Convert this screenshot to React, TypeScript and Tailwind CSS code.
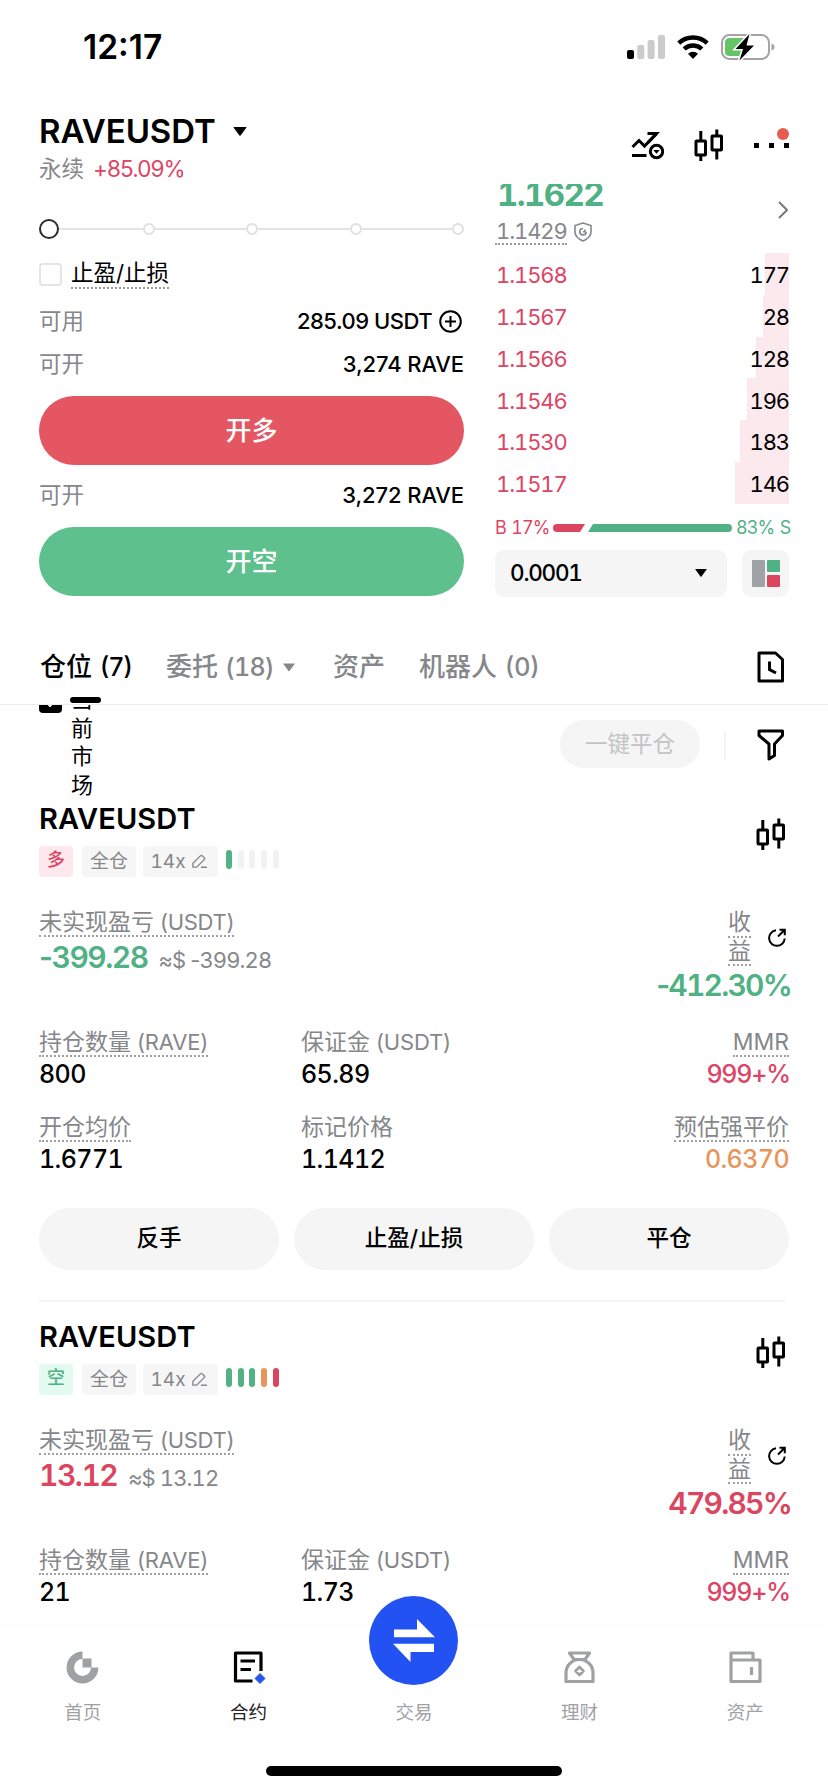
import { Fragment } from "react";

type Position = {
  side: string;
  sideClass: string;
  bars: string[];
  pnl: string;
  roi: string;
  tone: string;
  size: string;
  margin: string;
  prices?: { open: string; mark: string; liq: string };
};

const asks = [
  { price: "1.1568", qty: "177", bar: "w-[24px]" },
  { price: "1.1567", qty: "28", bar: "w-[26px]" },
  { price: "1.1566", qty: "128", bar: "w-[33px]" },
  { price: "1.1546", qty: "196", bar: "w-[42px]" },
  { price: "1.1530", qty: "183", bar: "w-[49px]" },
  { price: "1.1517", qty: "146", bar: "w-[54px]" },
];

const positions: Position[] = [
  {
    side: "多",
    sideClass: "bg-[#fde9ed] text-[#dc4565]",
    bars: ["bg-[#52b283]", "bg-[#f2f2f4]", "bg-[#f2f2f4]", "bg-[#f2f2f4]", "bg-[#f2f2f4]"],
    pnl: "-399.28",
    roi: "-412.30%",
    tone: "text-[#50b184]",
    size: "800",
    margin: "65.89",
    prices: { open: "1.6771", mark: "1.1412", liq: "0.6370" },
  },
  {
    side: "空",
    sideClass: "bg-[#e2faf0] text-[#50b184]",
    bars: ["bg-[#52b283]", "bg-[#52b283]", "bg-[#52b283]", "bg-[#e7955a]", "bg-[#dc4560]"],
    pnl: "13.12",
    roi: "479.85%",
    tone: "text-[#dc4560]",
    size: "21",
    margin: "1.73",
  },
];

function Caret({ className }: { className: string }) {
  return (
    <svg viewBox="0 0 12 8" className={className} fill="currentColor">
      <path d="M0.6 0h10.8q0.6 0 0.2 0.6L6.5 7.5q-0.5 0.6-1 0L0.4 0.6Q0 0 0.6 0z" />
    </svg>
  );
}

function CandleIcon() {
  return (
    <svg viewBox="0 0 30 32" className="h-8 w-[30px]" fill="none" stroke="black" strokeWidth="3">
      <rect x="2" y="12" width="9.5" height="14" rx="0.5" />
      <rect x="18" y="7" width="9.5" height="14" rx="0.5" />
      <path d="M6.8 2v10M6.8 26v6M22.8 0.5V7M22.8 21v9.5" />
    </svg>
  );
}

// digits are tabular, the minus sign keeps its narrow form
function Signed({ value }: { value: string }) {
  const negative = value.startsWith("-");
  return (
    <>
      {negative && <span className="normal-nums">-</span>}
      {negative ? value.slice(1) : value}
    </>
  );
}

function StatusBar() {
  return (
    <div className="flex h-[94px] shrink-0 items-center justify-between pr-[53px] pl-[83px]">
      <span className="text-[33.5px] leading-10 font-semibold">12:17</span>
      <div className="flex items-center gap-[12px]">
        <svg viewBox="0 0 38 24" className="h-6 w-[38px]">
          <rect x="0" y="15" width="7" height="9" rx="2" fill="black" />
          <rect x="10.3" y="10" width="7" height="14" rx="2" fill="#cbcbcb" />
          <rect x="20.6" y="5" width="7" height="19" rx="2" fill="#cbcbcb" />
          <rect x="31" y="0" width="7" height="24" rx="2" fill="#cbcbcb" />
        </svg>
        <svg viewBox="0 0 32 24" className="h-6 w-8" fill="none" stroke="black" strokeWidth="4.4">
          <path d="M1.8 8.2a20.5 20.5 0 0 1 28.4 0" />
          <path d="M7.2 14a12.8 12.8 0 0 1 17.6 0" />
          <path d="M16 24l-5-5.2a7.4 7.4 0 0 1 10 0z" fill="black" stroke="none" />
        </svg>
        <svg viewBox="0 0 54 28" className="h-7 w-[54px]">
          <rect x="1" y="2" width="47" height="24" rx="7.5" fill="none" stroke="#a4a4a4" strokeWidth="2" />
          <path d="M50.5 10.5q3 1 3 3.5t-3 3.5z" fill="#a4a4a4" />
          <path d="M8.5 5H26v18H8.5Q4 23 4 18.5v-9Q4 5 8.5 5z" fill="#65c466" />
          <path d="M28.5 1L14.5 16h7.5l-3.5 11.5L33 12.5h-7.5z" fill="black" stroke="white" strokeWidth="3" paintOrder="stroke" />
        </svg>
      </div>
    </div>
  );
}

function PairHeader() {
  return (
    <header className="flex h-[90px] shrink-0 justify-between pr-[39px] pl-[39px]">
      <div className="pt-[17px]">
        <div className="flex items-center gap-[17px]">
          <h1 className="text-[33px] leading-10 font-semibold tracking-[-0.1px]">RAVEUSDT</h1>
          <Caret className="h-[9px] w-[14px]" />
        </div>
        <div className="flex gap-2 text-[22.5px] leading-9">
          <span className="text-[#85878a]">永续</span>
          <span className="ml-px tracking-[-0.9px] text-[#dc4565]">+85.09%</span>
        </div>
      </div>
      <div className="flex items-start gap-[30px] pt-[35px]">
        <svg viewBox="0 0 34 32" className="mt-px h-8 w-[34px]" fill="none" stroke="black" strokeWidth="3">
          <path d="M2.5 17L9 10.5l5.5 5.5L26.5 3.8" />
          <path d="M17.5 3.5h9L18 12.5" />
          <path d="M2 25.5h14.5" />
          <circle cx="26.5" cy="21.5" r="6.2" />
          <path d="M23.3 20h6.4l-3.2 3.8z" fill="black" stroke="none" />
        </svg>
        <CandleIcon />
        <div className="relative flex w-[35px] justify-between pt-[14px]">
          <i className="size-[5px] bg-black" />
          <i className="size-[5px] bg-black" />
          <i className="size-[5px] bg-black" />
          <i className="absolute -top-px right-0 size-3 rounded-full bg-[#e85b50]" />
        </div>
      </div>
    </header>
  );
}

function OrderForm() {
  return (
    <div className="flex w-[425px] flex-col pt-[35px]">
      <div className="flex h-5 items-center">
        <i className="size-5 rounded-full border-[2.5px] border-[#2c2c2e]" />
        {["w-[84px]", "w-[92px]", "w-[92px]", "w-[90px]"].map((w, i) => (
          <Fragment key={i}>
            <i className={`h-0.5 bg-[#e3e3e3] ${w}`} />
            <i className="size-3 shrink-0 rounded-full border-2 border-[#e0e0e0]" />
          </Fragment>
        ))}
      </div>

      <div className="mt-5 flex items-center gap-[9px]">
        <i className="size-[23px] rounded-sm border-2 border-[#e4e4e4]" />
        <span className="border-b-2 border-dotted border-[#9a9a9a] text-[22.5px] leading-[28px]">止盈/止损</span>
      </div>

      <div className="mt-[14px] flex h-9 items-center justify-between text-[22.5px]">
        <span className="text-[#85878a]">可用</span>
        <span className="flex items-center gap-[7px] pr-0.5 text-[22px] font-medium tracking-[-0.5px]">
          285.09 USDT
          <svg viewBox="0 0 23 23" className="size-[23px]" fill="none" stroke="black" strokeWidth="2">
            <circle cx="11.5" cy="11.5" r="10.3" />
            <path d="M11.5 6v11M6 11.5h11" />
          </svg>
        </span>
      </div>
      <div className="mt-[7px] flex h-9 items-center justify-between text-[22.5px]">
        <span className="text-[#85878a]">可开</span>
        <span className="text-[22px] font-medium tracking-[-0.1px]">3,274 RAVE</span>
      </div>
      <button className="mt-[14px] h-[69px] rounded-full bg-[#e45661] text-[26px] font-medium text-white">开多</button>
      <div className="mt-3 flex h-9 items-center justify-between text-[22.5px]">
        <span className="text-[#85878a]">可开</span>
        <span className="text-[22px] font-medium tracking-[-0.1px]">3,272 RAVE</span>
      </div>
      <button className="mt-[14px] h-[69px] rounded-full bg-[#5ec08c] text-[26px] font-medium text-white">开空</button>
    </div>
  );
}

function OrderBook() {
  return (
    <div className="flex w-[294px] flex-col tabular-nums">
      <div className="flex h-[69px] justify-between">
        <div>
          <div className="-mt-[10px] pl-0.5 text-[33px] leading-10 font-bold tracking-[-1.6px] text-[#50b184]">1.1622</div>
          <div className="mt-[5px] flex items-center gap-[7px] text-[#85878a]">
            <span className="border-b-2 border-dotted border-[#9a9a9a] pl-px text-[22px] leading-6 tracking-[-1.1px]">1.1429</span>
            <svg viewBox="0 0 18 20" className="h-5 w-[18px]" fill="none" stroke="currentColor" strokeWidth="1.6">
              <path d="M9 1l8 2.5v6.5q0 5.5-8 9-8-3.5-8-9V3.5z" />
              <path d="M9 6.5a3.2 3.2 0 1 0 3.2 3.2M9 9.7h1.8V7.5" />
            </svg>
          </div>
        </div>
        <svg viewBox="0 0 10 18" className="mt-[17px] mr-px h-[18px] w-[10px]" fill="none" stroke="#77797c" strokeWidth="2">
          <path d="M1 1l8 8-8 8" />
        </svg>
      </div>

      {asks.map((row) => (
        <div key={row.price} className="relative flex h-[41.75px] items-center justify-between pt-[3px] pl-px text-[22px] leading-[38px] tracking-[-1.1px]">
          <i className={`absolute inset-y-0 right-0 bg-[#fce9ed] ${row.bar}`} />
          <span className="text-[#dc4565]">{row.price}</span>
          <span className="relative">{row.qty}</span>
        </div>
      ))}

      <div className="mt-3 flex h-6 items-center justify-between text-[18px] leading-6 tracking-[-0.9px] whitespace-nowrap [word-spacing:1.5px]">
        <span className="w-[53px] text-[#dc4565]">B 17%</span>
        <svg viewBox="0 0 179 8" className="h-2 w-[179px] shrink-0">
          <path d="M4 0h28l-5 8H4a4 4 0 0 1 0-8z" fill="#dc4560" />
          <path d="M40 0h135a4 4 0 0 1 0 8H35z" fill="#50b184" />
        </svg>
        <span className="w-[53px] text-right text-[#50b184]">83% S</span>
      </div>

      <div className="mt-[10px] flex justify-between">
        <div className="flex h-[47px] w-[232px] items-center justify-between rounded-[9px] bg-[#f5f5f5] pr-5 pl-[15px]">
          <span className="text-[22.5px] font-medium tracking-[-1.2px]">0.0001</span>
          <Caret className="h-[8px] w-3" />
        </div>
        <div className="flex size-[47px] items-center justify-center gap-0.5 rounded-[9px] bg-[#f5f5f5]">
          <i className="h-[27px] w-[13px] rounded-[1px] bg-[#a0a3a6]" />
          <div className="flex flex-col gap-[3px]">
            <i className="h-3 w-[13px] rounded-[1px] bg-[#50b184]" />
            <i className="h-3 w-[13px] rounded-[1px] bg-[#dc4560]" />
          </div>
        </div>
      </div>
    </div>
  );
}

function Tabs() {
  return (
    <div className="flex h-[71px] shrink-0 items-center justify-between border-b border-[#ececec] pr-[44px] pb-1 pl-10 text-[26px] font-medium text-[#85878a]">
      <div className="flex items-center leading-10">
        <span className="relative w-[126px] text-black">
          仓位<span className="ml-2 text-[25px]">(7)</span>
          <i className="absolute top-[50px] left-[30px] z-10 h-1.5 w-[31px] rounded-full bg-black" />
        </span>
        <span className="flex w-[167px] items-center">
          委托<span className="ml-[7px] text-[25px] tracking-[-0.8px] tabular-nums">(18)</span>
          <Caret className="ml-[9px] h-[9px] w-3" />
        </span>
        <span className="w-[86px]">资产</span>
        <span>
          机器人<span className="ml-2 text-[25px]">(0)</span>
        </span>
      </div>
      <svg viewBox="0 0 27 32" className="h-8 w-[27px]" fill="none" stroke="black" strokeWidth="3">
        <path d="M2 2h16.5l7 6.5V30H2z" strokeLinejoin="round" />
        <path d="M12.5 10.5v8l6.5 3.5" />
      </svg>
    </div>
  );
}

function FilterRow() {
  return (
    <div className="flex h-[96px] shrink-0 justify-between overflow-hidden pr-[44px] pl-[39px]">
      <div className="flex gap-[9px]">
        <div className="-mt-[15px] flex size-[23px] items-center justify-center rounded bg-black">
          <svg viewBox="0 0 14 10" className="h-[10px] w-[14px]" fill="none" stroke="white" strokeWidth="2">
            <path d="M1 4l5 5 7-8" />
          </svg>
        </div>
        <div className="-mt-5 w-[23px] text-[22px] leading-[28.5px]">当前市场</div>
      </div>
      <div className="flex items-start pt-[15px]">
        <button className="h-12 w-[140px] rounded-full bg-[#f5f5f5] text-[22.5px] text-[#c2c3c5]">一键平仓</button>
        <i className="mt-3 ml-6 h-7 w-0.5 bg-[#f2f2f2]" />
        <svg viewBox="0 0 27 32" className="mt-[9px] ml-[31px] h-8 w-[27px]" fill="none" stroke="black" strokeWidth="3" strokeLinejoin="round">
          <path d="M2 2h23.5v4.5L17.5 15v11.500L12 30V15L2 6.5z" />
        </svg>
      </div>
    </div>
  );
}

function Cell({ label, value, dotted = true, right = false, valueClass = "tracking-[-0.6px]" }: { label: string; value: string; dotted?: boolean; right?: boolean; valueClass?: string }) {
  const [cjk, unit] = label.split(" ");
  return (
    <div className={`flex h-16 flex-col ${right ? "items-end" : "items-start"}`}>
      <span className={`h-7 text-[23px] leading-[27px] text-[#85878a] ${dotted ? "border-b-2 border-dotted border-[#a0a0a0]" : ""}`}>
        {cjk}
        {unit && <span className="ml-[6px] text-[22px] tracking-[-0.2px]">{unit}</span>}
      </span>
      <span className={`text-[25px] leading-[35px] font-medium tabular-nums ${valueClass}`}>{value}</span>
    </div>
  );
}

function PositionCard({ p }: { p: Position }) {
  return (
    <section className="px-[39px]">
      <div className="flex justify-between">
        <div>
          <h2 className="text-[29px] leading-[35px] font-semibold tracking-[0.1px]">RAVEUSDT</h2>
          <div className="mt-[10px] flex gap-[7px] text-[19px] leading-[31px] text-[#85878a]">
            <span className={`mr-0.5 h-[31px] w-[34px] rounded text-center text-[18px] leading-[28px] font-medium ${p.sideClass}`}>{p.side}</span>
            <span className="w-[54px] rounded bg-[#f6f6f7] text-center">全仓</span>
            <span className="flex w-[75px] items-center justify-center gap-1.5 rounded bg-[#f6f6f7] pr-1 tabular-nums">
              14x
              <svg viewBox="0 0 16 16" className="size-[15px]" fill="none" stroke="currentColor" strokeWidth="1.5">
                <path d="M1 14v-4l8-8q1-1 2 0l2 2q1 1 0 2L5 14zM9.5 14.2H16" />
              </svg>
            </span>
            <div className="ml-px flex gap-[5.7px] pt-1">
              {p.bars.map((c, i) => (
                <i key={i} className={`h-[19px] w-1.5 rounded-full ${c}`} />
              ))}
            </div>
          </div>
        </div>
        <div className="mt-[17px] mr-[3px]">
          <CandleIcon />
        </div>
      </div>

      <div className="mt-8 flex h-[97px] justify-between">
        <div>
          <span className="inline-block border-b-2 border-dotted border-[#a0a0a0] align-top text-[23px] leading-[26px] text-[#85878a]">
            未实现盈亏<span className="ml-[6px] text-[22px] tracking-[-0.3px]">(USDT)</span>
          </span>
          <div className="flex items-baseline gap-[11px] leading-10 tabular-nums">
            <span className={`text-[30px] font-semibold tracking-[-1.5px] ${p.tone}`}>
              <Signed value={p.pnl} />
            </span>
            <span className="text-[22px] tracking-[-0.9px] text-[#85878a]">
              ≈$ <Signed value={p.pnl} />
            </span>
          </div>
        </div>
        <div className="flex flex-col items-end">
          <div className="flex items-center gap-[17px] pr-[3px]">
            <div className="flex flex-col text-[23px] leading-[26.5px] text-[#85878a]">
              <span className="border-b-2 border-dotted border-[#a0a0a0]">收</span>
              <span className="border-b-2 border-dotted border-[#a0a0a0]">益</span>
            </div>
            <svg viewBox="0 0 18 19" className="h-[19px] w-[18px]" fill="none" stroke="black" strokeWidth="2">
              <path d="M8 2.3A7.8 7.8 0 1 0 16.7 10.5M10 8.5L16.5 2M11.5 1.8h5.300v5.5" />
            </svg>
          </div>
          <span className={`-mr-0.5 text-[30px] leading-[39px] font-semibold tracking-[-1.8px] tabular-nums ${p.tone}`}>
            <Signed value={p.roi} />
          </span>
        </div>
      </div>

      <div className="mt-[23px] grid grid-cols-[262px_1fr_1fr] gap-y-[21px]">
        <Cell label="持仓数量 (RAVE)" value={p.size} />
        <Cell label="保证金 (USDT)" value={p.margin} dotted={false} />
        <Cell label="MMR" value="999+%" right valueClass="text-[#dc4565] tracking-[-1.2px] -mr-px" />
        {p.prices && (
          <>
            <Cell label="开仓均价" value={p.prices.open} />
            <Cell label="标记价格" value={p.prices.mark} dotted={false} />
            <Cell label="预估强平价" value={p.prices.liq} right valueClass="text-[#e7955a] tracking-[-0.6px]" />
          </>
        )}
      </div>

      {p.prices && (
        <>
          <div className="mt-[30px] grid grid-cols-3 gap-[15px]">
            {["反手", "止盈/止损", "平仓"].map((t) => (
              <button key={t} className="h-[62px] rounded-full bg-[#f5f5f5] pb-0.5 text-[22.5px] font-medium">
                {t}
              </button>
            ))}
          </div>
          <div className="mt-[30px] mr-1 mb-[17px] h-0.5 bg-[#f5f5f5]" />
        </>
      )}
    </section>
  );
}

function BottomNav() {
  const items = [
    {
      label: "首页",
      icon: (
        <>
          <path d="M16.5 4.3A12.2 12.2 0 1 0 28.7 16.5" stroke="#a0a1a3" strokeWidth="7.5" fill="none" />
          <path d="M16.5 7.5h9v9h-9z" fill="#a0a1a3" />
        </>
      ),
    },
    {
      label: "合约",
      icon: (
        <g fill="none" stroke="black" strokeWidth="3.2">
          <path d="M20.5 30H3.5V2h25.5v18" strokeLinejoin="round" />
          <path d="M8.5 10h14.5M8.5 18.5h10.5" />
          <path d="M28 22.5l5 5-5 5-5-5z" fill="#2856e8" stroke="#2856e8" strokeWidth="1" strokeLinejoin="round" />
        </g>
      ),
    },
    { label: "交易", icon: null },
    {
      label: "理财",
      icon: (
        <g fill="none" stroke="#a0a1a3" strokeWidth="3.2" strokeLinejoin="round">
          <path d="M6.5 2h20l-4.5 6.5H11zM3 30.5V22a13.5 13.5 0 0 1 27 0v8.5z" />
          <path d="M16.5 16l4 4-4 4-4-4z" strokeWidth="2.6" />
        </g>
      ),
    },
    {
      label: "资产",
      icon: (
        <g fill="none" stroke="#a0a1a3" strokeWidth="3.2" strokeLinejoin="round">
          <path d="M2 9V2h22v7M2 9h29v21.5H2z" />
          <path d="M22.5 16v8" />
        </g>
      ),
    },
  ];
  return (
    <nav className="relative z-20 flex h-[166px] shrink-0 flex-col items-center bg-white pt-[25px] shadow-[0_-1px_5px_rgba(0,0,0,0.025)]">
      <div className="grid w-full grid-cols-5">
        {items.map((item) => (
          <div key={item.label} className="relative flex flex-col items-center">
            {item.icon ? (
              <svg viewBox="0 0 33 33" className="h-[33px] w-[33px] overflow-visible">
                {item.icon}
              </svg>
            ) : (
              <>
                <div className="h-[33px]" />
                <div className="absolute -top-[55px] flex size-[89px] items-center justify-center rounded-full bg-[#2252f2]">
                  <svg viewBox="0 0 42 43" className="h-[43px] w-[42px]" fill="white">
                    <path d="M1 10.5h23V0l18 18.3H1zM41 33H17.5v10L0 24.7h41z" />
                  </svg>
                </div>
              </>
            )}
            <span className={`mt-3 text-[18.5px] leading-8 ${item.label === "合约" ? "text-[#222]" : "text-[#a0a1a5]"}`}>{item.label}</span>
          </div>
        ))}
      </div>
      <i className="mt-[38px] h-[10px] w-[296px] rounded-full bg-black" />
    </nav>
  );
}

export default function App() {
  return (
    <div className="flex h-[1792px] w-[828px] flex-col overflow-hidden bg-white font-['Inter','Noto_Sans_CJK_SC',sans-serif] text-black">
      <StatusBar />
      <PairHeader />
      <main className="flex min-h-0 flex-1 flex-col">
        <div className="flex h-[450px] shrink-0 justify-between overflow-hidden pr-[39px] pl-[39px]">
          <OrderForm />
          <OrderBook />
        </div>
        <Tabs />
        <FilterRow />
        <div className="min-h-0 flex-1 overflow-hidden">
          {positions.map((p) => (
            <PositionCard key={p.side} p={p} />
          ))}
        </div>
      </main>
      <BottomNav />
    </div>
  );
}
